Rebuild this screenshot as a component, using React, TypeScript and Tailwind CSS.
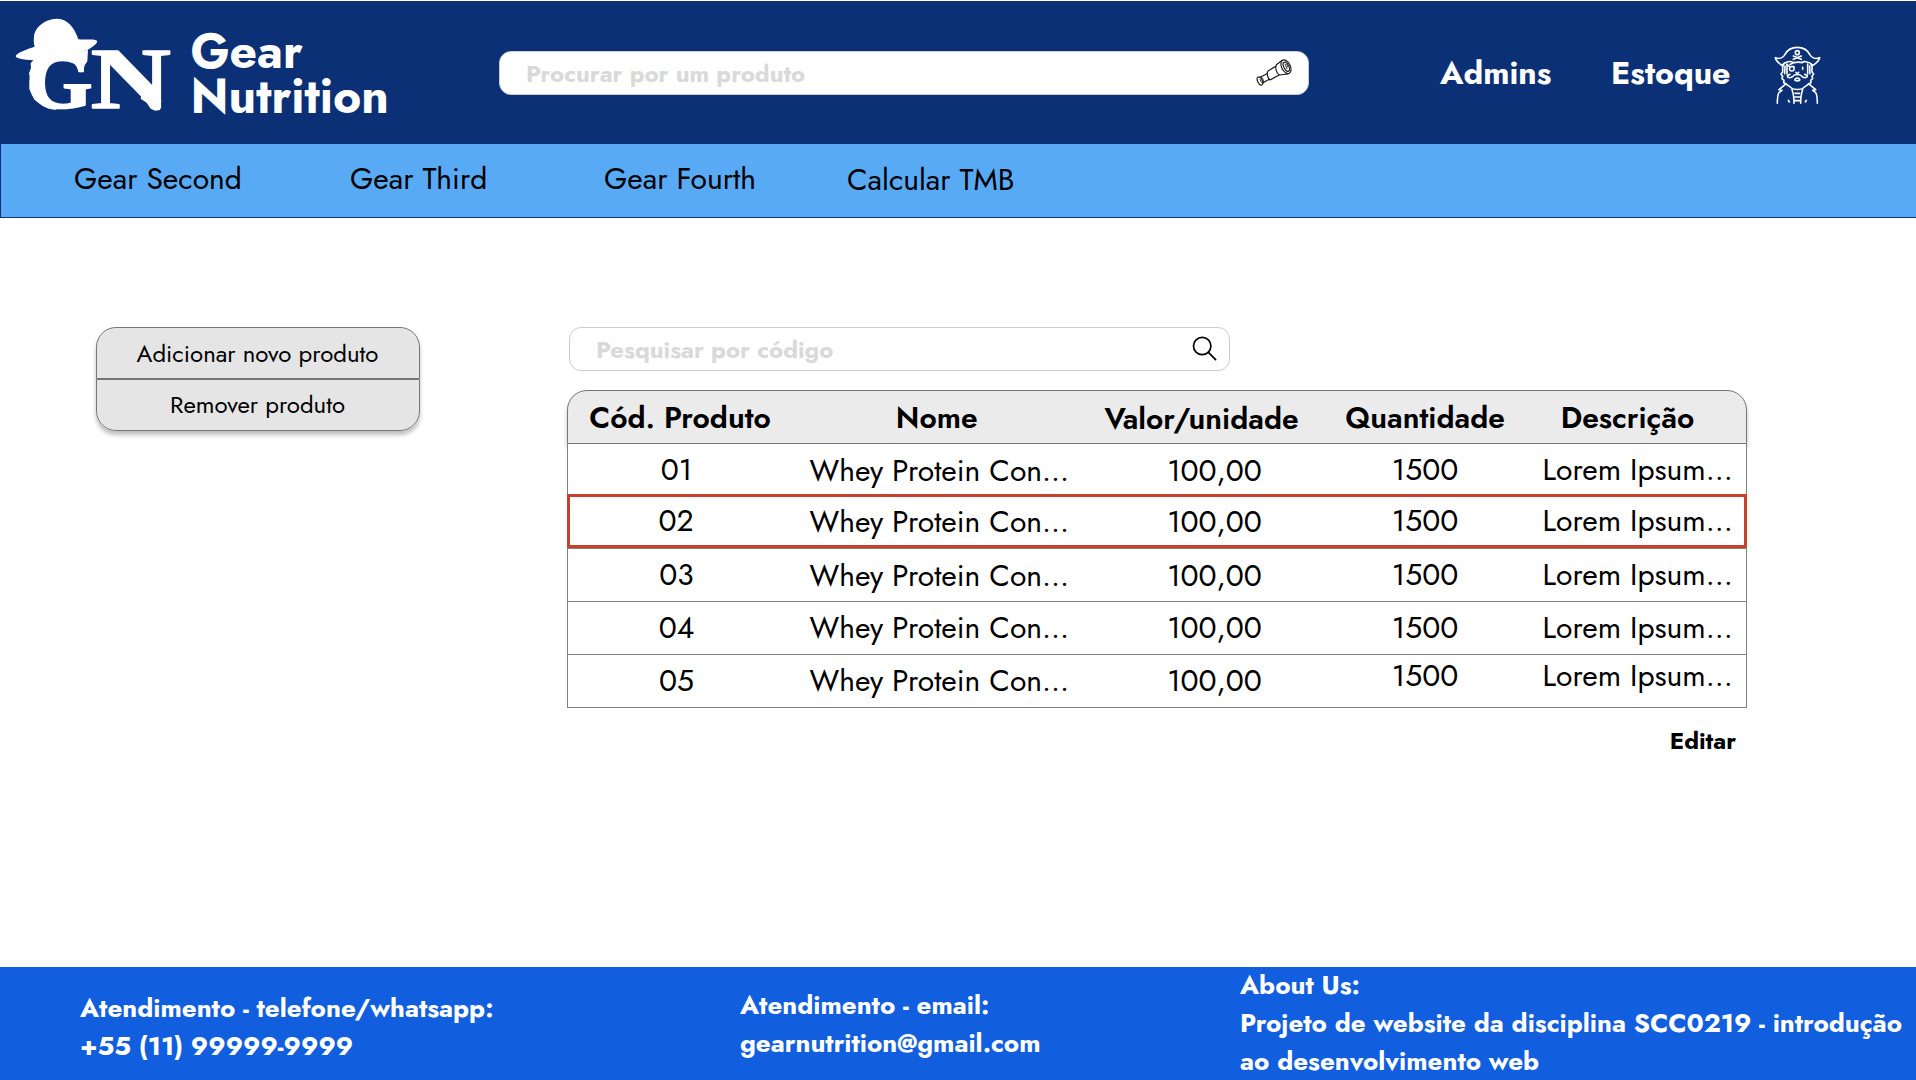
import React from "react";

function Logo() {
  return (
    <svg className="mt-[16px] ml-[13px] h-[98px] w-[162px] shrink-0" viewBox="39 51 486 294" fill="#fff" aria-label="GN">
      <path d="M47 168C52 158 80 148 104 140C100 128 101 116 103 102C110 76 140 56 172 56C204 57 224 84 235 118C254 120 276 117 289 121C297 126 284 138 262 150C254 153 246 155 240 158L220 174C200 168 176 170 160 174C146 178 128 178 110 181C84 180 48 178 47 168Z" />
      <path d="M104 176L92 190L93 204L87 220L91 240L88 268L98 282L102 298L116 308L128 318L146 326L168 330L160 318L140 296L132 262L134 220L146 190L160 173Z" />
      <path d="M264 150L262 184L254 196L250 214L236 216L230 200L218 186L206 174L240 156Z" />
      <g fontFamily="'Liberation Serif', serif" fontWeight={700} stroke="#fff" strokeLinejoin="round">
        <text x={78} y={325} fontSize={236} strokeWidth={5} textLength={200} lengthAdjust="spacingAndGlyphs">G</text>
        <text x={272} y={324} fontSize={258} strokeWidth={5} textLength={240} lengthAdjust="spacingAndGlyphs">N</text>
      </g>
      <path d="M424 284L422 296L440 308L452 326L466 332L480 330L484 300Z" />
    </svg>
  );
}

function Spyglass() {
  return (
    <svg className="h-[30px] w-[40px]" viewBox="70 80 120 90" fill="none" stroke="#161616" strokeWidth={3.4} strokeLinecap="round" strokeLinejoin="round">
      <ellipse cx={166} cy={109} rx={13} ry={22} transform="rotate(-27 166 109)" />
      <ellipse cx={167} cy={109} rx={7.5} ry={15} transform="rotate(-27 167 109)" />
      <path d="M163 101l6 14M168 101l3 9" strokeWidth={2.4} />
      <path d="M155 90L137 103C132 112 137 127 146 134L172 131" />
      <path d="M135 108L112 122C107 130 111 143 118 149L144 135" />
      <path d="M109 130L91 139M116 147L97 157" />
      <ellipse cx={88} cy={152} rx={7} ry={13} transform="rotate(-25 88 152)" />
      <path d="M91 140c7 3 9 10 6 17M88 147l4 9" strokeWidth={2.6} />
    </svg>
  );
}

function Pirate() {
  return (
    <svg className="h-[60px] w-[50px]" viewBox="70 45 150 180" fill="none" stroke="#fff" strokeWidth={4.8} strokeLinecap="round" strokeLinejoin="round">
      <path d="M96 106C88 100 78 92 77 83C88 88 100 84 106 73C114 58 129 52 143 52C157 52 172 58 180 73C186 84 198 88 210 83C209 92 199 100 190 106C176 92 160 94 156 97M96 106C108 93 124 93 130 97M121 103C134 96 150 96 158 98" />
      <circle cx={143} cy={68} r={6} />
      <path d="M131 78L155 88M155 78L131 88" />
      <path d="M102 103L99 110V126L94 132L99 139L97 146L103 151L102 158L109 161M184 103L187 110V126L192 132L187 139L189 146L183 151L184 158L177 161" />
      <path d="M106 108L105 131M180 108L181 131M112 102V132M174 102V132" />
      <path d="M120 110H133V119C132 124 122 125 120 119ZM120 110L112 104" />
      <path d="M159 112V118M139 127C141 131 145 131 147 127" />
      <path d="M143 134C136 132 131 137 127 141C120 145 113 143 113 137C116 137 117 133 121 133M143 134C150 132 155 137 159 141C166 145 173 143 173 137C170 137 169 133 165 133" />
      <path d="M136 148C140 144 146 144 150 148C154 154 132 154 136 148Z" />
      <path d="M109 161C114 168 120 167 125 174C132 180 154 180 161 174C166 167 172 168 177 161" />
      <path d="M106 164L88 179L97 181L88 188C84 194 83 206 83 220M180 164L198 179L189 181L198 188C202 194 203 206 203 220" />
      <path d="M116 211L119 216M170 211L167 216" />
      <path d="M127 179C132 192 133 206 133 220M159 179C154 192 153 206 153 220M136 190H150M135 201H151M135 212H151" />
    </svg>
  );
}

type Row = {
  code: string;
  row: string;
  a: string;
  b: string;
  c: string;
};

const rows: Row[] = [
  { code: "01", row: "h-[50px] border-x border-[#808080]", a: "pt-[4px]", b: "pt-[5px]", c: "pt-[4px]" },
  { code: "02", row: "h-[54px] border-[3px] border-[#c8422b]", a: "pt-[2px] -ml-[2.5px] mr-[2.5px]", b: "pt-[3px] -ml-[2px] mr-[2px]", c: "pt-[2px] -ml-[2px] mr-[2px]" },
  { code: "03", row: "h-[54px] border border-[#808080]", a: "pt-[4px]", b: "pt-[5px]", c: "pt-[4px]" },
  { code: "04", row: "h-[53px] border-x border-b border-[#808080]", a: "pt-[4px]", b: "pt-[4px]", c: "pt-[4px]" },
  { code: "05", row: "h-[53px] border-x border-b border-[#808080]", a: "pt-[4px]", b: "pt-[4px]", c: "-mt-px" },
];

function StockTable() {
  return (
    <div className="w-[1180px] text-[30px] leading-[43px] text-black">
      <div className="grid h-[54px] grid-cols-[224px_289.5px_240px_207px_198px] rounded-t-[20px] border border-[#777] bg-[#ebebeb] pt-[5px] text-center font-semibold shadow-[0_4px_4px_rgba(0,0,0,0.25)]">
        <div>Cód. Produto</div>
        <div>Nome</div>
        <div className="pt-px">Valor/unidade</div>
        <div>Quantidade</div>
        <div>Descrição</div>
      </div>
      {rows.map((r) => (
        <div
          key={r.code}
          className={"relative grid grid-cols-[217px_308.5px_242px_179px_1fr] bg-white text-center whitespace-nowrap " + r.row}
        >
          <div className={r.a}>{r.code}</div>
          <div className={r.b}>Whey Protein Con...</div>
          <div className={r.b}>100,00</div>
          <div className={r.c}>1500</div>
          <div className={r.c + " pl-[28px] text-left"}>Lorem Ipsum...</div>
        </div>
      ))}
    </div>
  );
}

export default function App() {
  return (
    <div className="flex h-[1080px] w-[1916px] flex-col overflow-hidden bg-white pt-px font-['Jost','Lato',sans-serif]">
      <header className="flex h-[143px] shrink-0 items-start bg-[#0b3075] text-white">
        <Logo />
        <div className="mt-[28px] ml-[15.5px] w-[308.5px] text-[48px] leading-[45px] font-bold">
          Gear
          <br />
          Nutrition
        </div>
        <div className="mt-[50px] flex h-[44px] w-[810px] items-start justify-between rounded-[12px] border border-[#ccc] bg-white pr-[14px] pl-[26px]">
          <span className="pt-[4px] text-[24px] leading-[35px] font-bold text-[#d9d9d9]">Procurar por um produto</span>
          <span className="pt-[5px]">
            <Spyglass />
          </span>
        </div>
        <nav className="mt-[49px] ml-[131px] flex text-[32px] leading-[46px] font-bold">
          <a className="w-[171px]">Admins</a>
          <a className="w-[162px]">Estoque</a>
        </nav>
        <span className="mt-[44px]">
          <Pirate />
        </span>
      </header>

      <nav className="grid h-[74px] shrink-0 grid-cols-[276px_254px_243px_auto] border-b border-l border-[#0b3075] bg-[#58aaf4] pt-[13px] pl-[73px] text-[30px] leading-[43px] text-black">
        <a>Gear Second</a>
        <a>Gear Third</a>
        <a>Gear Fourth</a>
        <a className="pt-px">Calcular TMB</a>
      </nav>

      <main className="flex grow items-start pt-[109px] pl-[96px]">
        <div className="w-[324px] rounded-[20px] text-center text-[24px] leading-[35px] text-black shadow-[0_4px_4px_rgba(0,0,0,0.25)]">
          <div className="h-[52px] rounded-t-[20px] border border-[#757575] bg-[#e5e5e5] pt-[8px] pr-px">Adicionar novo produto</div>
          <div className="h-[52px] rounded-b-[20px] border border-[#757575] bg-[#e5e5e5] pt-[7px] pr-px">Remover produto</div>
        </div>

        <section className="ml-[147px] flex flex-col">
          <div className="ml-[2px] flex h-[44px] w-[661px] items-start justify-between rounded-[12px] border border-[#ccc] bg-white pr-[12px] pl-[26px]">
            <span className="pt-[4px] text-[24px] leading-[35px] font-bold text-[#d9d9d9]">Pesquisar por código</span>
            <svg className="mt-[8px] h-[25px] w-[25px]" viewBox="0 0 25 25" fill="none" stroke="#000" strokeWidth={1.7} strokeLinecap="round">
              <circle cx={10.2} cy={10} r={8.7} />
              <path d="M16.4 16.3L23.6 23.6" />
            </svg>
          </div>
          <div className="mt-[19px]">
            <StockTable />
          </div>
          <div className="mt-[15px] pr-[11px] text-right text-[24px] leading-[35px] font-bold text-black">Editar</div>
        </section>
      </main>

      <footer className="grid h-[113px] shrink-0 grid-cols-[660px_500px_auto] bg-[#115ede] pl-[80px] text-[26px] leading-[38px] font-bold whitespace-nowrap text-white">
        <div className="pt-[22px]">
          Atendimento - telefone/whatsapp:
          <br />
          +55 (11) 99999-9999
        </div>
        <div className="pt-[19px]">
          Atendimento - email:
          <br />
          gearnutrition@gmail.com
        </div>
        <div className="-mt-px">
          About Us:
          <br />
          Projeto de website da disciplina SCC0219 - introdução
          <br />
          ao desenvolvimento web
        </div>
      </footer>
    </div>
  );
}
